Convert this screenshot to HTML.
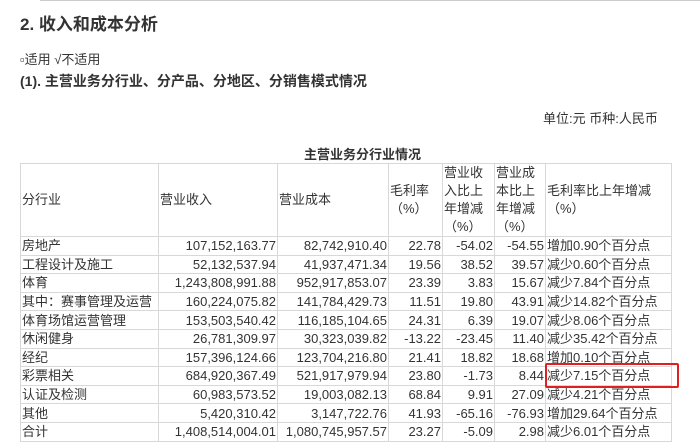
<!DOCTYPE html>
<html><head><meta charset="utf-8"><style>
body{margin:0;width:700px;height:448px;overflow:hidden;background:#fff;font-family:"Liberation Sans","Noto Sans CJK SC",sans-serif;color:#333;position:relative}
.t{position:absolute;white-space:nowrap}
table{position:absolute;left:20px;top:163px;border-collapse:collapse;table-layout:fixed;font-size:13px}
td{border:1px solid #d8d8d8;padding:0 1px;height:17.6px;line-height:17px;white-space:nowrap;overflow:hidden}
td.r{text-align:right}
thead td{height:72px;line-height:18px;vertical-align:middle}
</style></head><body>
<div style="position:absolute;left:40px;top:0;width:660px;height:1px;background:#ccc"></div>
<div class="t" style="left:20px;top:10px;font-size:17px;font-weight:bold">2. 收入和成本分析</div>
<div class="t" style="left:20px;top:49px;font-size:13px">▫适用 √不适用</div>
<div class="t" style="left:20px;top:71px;font-size:14px;font-weight:bold">(1). 主营业务分行业、分产品、分地区、分销售模式情况</div>
<div class="t" style="left:543px;top:108px;font-size:13px">单位:元 币种:人民币</div>
<div class="t" style="left:304px;top:144px;font-size:13px;font-weight:bold">主营业务分行业情况</div>
<table>
<colgroup><col style="width:138px"><col style="width:119px"><col style="width:111px"><col style="width:54px"><col style="width:52px"><col style="width:51px"><col style="width:126px"></colgroup>
<thead><tr><td>分行业</td><td>营业收入</td><td>营业成本</td><td>毛利率<br>（%）</td><td>营业收<br>入比上<br>年增减<br>（%）</td><td>营业成<br>本比上<br>年增减<br>（%）</td><td>毛利率比上年增减<br>（%）</td></tr></thead>
<tbody>
<tr><td>房地产</td><td class="r">107,152,163.77</td><td class="r">82,742,910.40</td><td class="r">22.78</td><td class="r">-54.02</td><td class="r">-54.55</td><td>增加0.90个百分点</td></tr>
<tr><td>工程设计及施工</td><td class="r">52,132,537.94</td><td class="r">41,937,471.34</td><td class="r">19.56</td><td class="r">38.52</td><td class="r">39.57</td><td>减少0.60个百分点</td></tr>
<tr><td>体育</td><td class="r">1,243,808,991.88</td><td class="r">952,917,853.07</td><td class="r">23.39</td><td class="r">3.83</td><td class="r">15.67</td><td>减少7.84个百分点</td></tr>
<tr><td>其中：赛事管理及运营</td><td class="r">160,224,075.82</td><td class="r">141,784,429.73</td><td class="r">11.51</td><td class="r">19.80</td><td class="r">43.91</td><td>减少14.82个百分点</td></tr>
<tr><td>体育场馆运营管理</td><td class="r">153,503,540.42</td><td class="r">116,185,104.65</td><td class="r">24.31</td><td class="r">6.39</td><td class="r">19.07</td><td>减少8.06个百分点</td></tr>
<tr><td>休闲健身</td><td class="r">26,781,309.97</td><td class="r">30,323,039.82</td><td class="r">-13.22</td><td class="r">-23.45</td><td class="r">11.40</td><td>减少35.42个百分点</td></tr>
<tr><td>经纪</td><td class="r">157,396,124.66</td><td class="r">123,704,216.80</td><td class="r">21.41</td><td class="r">18.82</td><td class="r">18.68</td><td>增加0.10个百分点</td></tr>
<tr><td>彩票相关</td><td class="r">684,920,367.49</td><td class="r">521,917,979.94</td><td class="r">23.80</td><td class="r">-1.73</td><td class="r">8.44</td><td>减少7.15个百分点</td></tr>
<tr><td>认证及检测</td><td class="r">60,983,573.52</td><td class="r">19,003,082.13</td><td class="r">68.84</td><td class="r">9.91</td><td class="r">27.09</td><td>减少4.21个百分点</td></tr>
<tr><td>其他</td><td class="r">5,420,310.42</td><td class="r">3,147,722.76</td><td class="r">41.93</td><td class="r">-65.16</td><td class="r">-76.93</td><td>增加29.64个百分点</td></tr>
<tr><td>合计</td><td class="r">1,408,514,004.01</td><td class="r">1,080,745,957.57</td><td class="r">23.27</td><td class="r">-5.09</td><td class="r">2.98</td><td>减少6.01个百分点</td></tr>
</tbody></table>
<div style="position:absolute;left:545px;top:363px;width:130px;height:21px;border:2px solid #e02020;border-radius:2px"></div>
</body></html>
